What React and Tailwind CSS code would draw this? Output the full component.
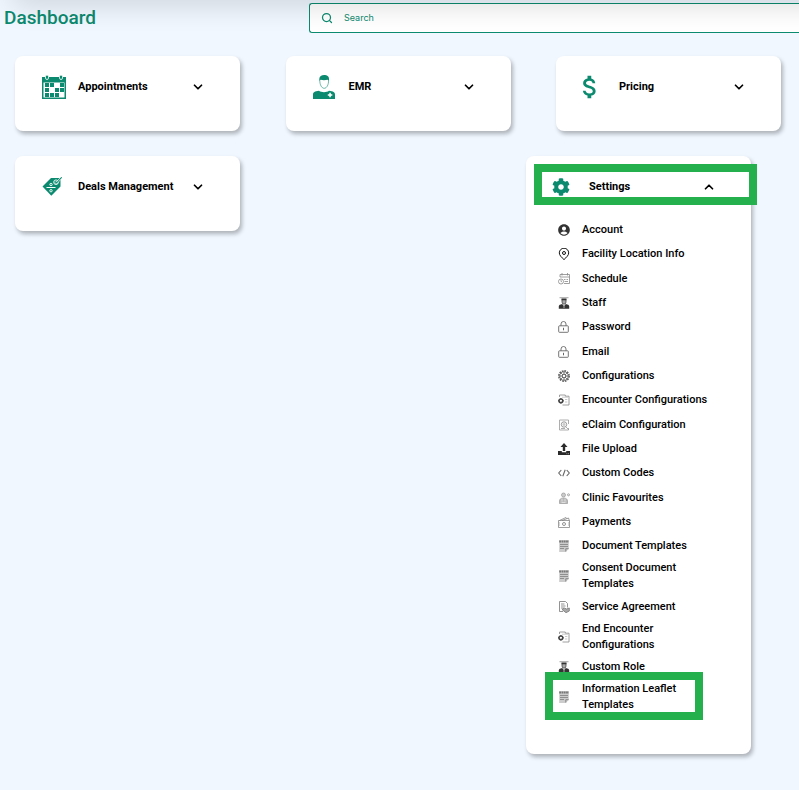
import React, { useState } from 'react'
import { ChevronDown, ChevronUp, Search } from 'lucide-react'
import { FaCog } from 'react-icons/fa'
import { MdAccountCircle, MdAttachMoney } from 'react-icons/md'

const CalendarIcon = () => (
  <svg viewBox="0 0 24 24" className="w-6 h-6" fill="#0c8a6f">
    <path d="M0 2h24v22H0zM1.500 7.500v15h21v-15z" fillRule="evenodd" />
    <rect x="3.500" y="0" width="3" height="4.500" rx="1.500" stroke="#fff" strokeWidth=".8" />
    <rect x="17.500" y="0" width="3" height="4.500" rx="1.500" stroke="#fff" strokeWidth=".8" />
    <path d="M8 8h4v4H8zM3 8h4v4H3zM18 8h4v4h-4zM3 13h4v4H3zM13 13h4v4h-4zM18 13h4v4h-4zM3 18h4v4H3zM8 18h4v4H8zM13 18h4v4h-4z" />
  </svg>
)

const DoctorIcon = () => (
  <svg viewBox="0 0 22 24" className="w-[22px] h-6" fill="#0c8a6f">
    <path d="M6.300 6V4C6.300 1.200 8.500 0 11.200 0s4.800 1 4.800 4v2l-1.300-1.300c-2.300.6-5 .6-7 .1z" />
    <path d="M6.800 5.500c0 4 1.700 7.800 4.400 7.800s4.400-3.800 4.400-7.800" fill="none" stroke="#0c8a6f" strokeWidth=".6" />
    <path d="M0 24v-4.200c0-2.600 1.700-3.600 6-4 1.200 1 3.200 1.400 5 1.400s3.800-.4 5-1.400c4.300.4 6 1.400 6 4V24z" />
    <path d="M16.300 17.800h1.500v1.500h1.500v1.500h-1.500v1.500h-1.500v-1.500h-1.500v-1.500h1.500z" fill="#fff" />
  </svg>
)

const DealsIcon = () => (
  <svg viewBox="0 0 20 20" className="w-5 h-5">
    <path d="M.5 9.500 9 1h9.500v8.500L9.300 18.800z" fill="#0c8a6f" />
    <path d="M4.500 10.500h9" stroke="#fff" strokeWidth="1" />
    <circle cx="9" cy="7.500" r="1.200" fill="none" stroke="#fff" strokeWidth=".9" />
    <circle cx="9" cy="13.700" r="1.200" fill="none" stroke="#fff" strokeWidth=".9" />
    <circle cx="14" cy="5.200" r="2.300" fill="none" stroke="#fff" strokeWidth=".9" />
    <path d="m13 4.500 1.500 1.500L19 1" fill="none" stroke="#fff" strokeWidth="2" />
    <path d="m13 4.500 1.500 1.500L19.700.3" fill="none" stroke="#0c8a6f" strokeWidth="1.100" />
  </svg>
)

// Small line icons of the settings menu share one 12px frame
const MenuSvg = ({ children, color = '#777' }) => (
  <svg viewBox="0 0 12 12" className="w-3 h-3" fill="none" stroke={color} strokeWidth="1">
    {children}
  </svg>
)

const AccountIcon = () => <MdAccountCircle className="w-3.5 h-3.5 -ml-px text-[#333]" />

const PinIcon = () => (
  <MenuSvg color="#111">
    <path d="M6 11.600C3.500 9.200 1.300 7.300 1.300 4.900a4.700 4.700 0 0 1 9.400 0C10.700 7.300 8.500 9.200 6 11.600z" />
    <circle cx="6" cy="5" r="1.500" />
  </MenuSvg>
)

const ScheduleIcon = () => (
  <MenuSvg color="#888">
    <path d="M2 4V1.500h9.500v9H6M2 4h9.500M4 0v2.500M9.500 0v2.500M6 6.500h1.500M8.500 6.500H10M6.500 8.500H10" strokeWidth=".8" />
    <circle cx="3" cy="8.500" r="2.500" strokeWidth=".8" />
    <path d="M3 7v1.600h1" strokeWidth=".7" />
  </MenuSvg>
)

const StaffIcon = () => (
  <MenuSvg color="#333">
    <path d="M1.500 .3h9v.9h-9z" fill="#999" stroke="none" />
    <path d="M4 2.500h4V5a2 2.200 0 0 1-4 0z" fill="#aaa" strokeWidth=".7" />
    <path d="M3.500 1.500h5v1.800h-5zM.8 11.700V9.300C.8 8 2.300 7.500 4.100 7L6 9l1.900-2c1.800.5 3.300 1 3.300 2.300v2.400z" fill="#333" stroke="none" />
    <path d="M6 8.500v2.500" stroke="#fff" strokeWidth=".6" />
  </MenuSvg>
)

const LockIcon = () => (
  <MenuSvg color="#666">
    <rect x=".7" y="4.800" width="9.600" height="6.500" rx=".7" strokeWidth=".9" />
    <path d="M3 4.800V3a2.500 2.500 0 0 1 5 0v1.800" strokeWidth=".9" />
    <path d="M5.500 6.800v2.500" strokeWidth="1" />
  </MenuSvg>
)

const GearIcon = () => (
  <MenuSvg color="#555">
    <circle cx="6" cy="6" r="5.200" strokeWidth="1.400" strokeDasharray="1.700 1" />
    <circle cx="6" cy="6" r="4.300" strokeWidth=".8" />
    <circle cx="6" cy="6" r="1.700" strokeWidth=".8" />
    <path d="M6 2v2.400M6 7.600V10M2 6h2.400M7.600 6H10M3.200 3.200l1.700 1.700M7.100 7.100l1.700 1.700M8.800 3.200 7.100 4.900M4.900 7.100 3.200 8.800" strokeWidth=".9" />
  </MenuSvg>
)

const EncounterIcon = () => (
  <MenuSvg color="#888">
    <path d="M1.500 3V1h5.800v1.200H11V11H4.500" strokeWidth=".8" />
    <path d="M4 3.200h6M7 5.500h2.300M7 8h2.300" stroke="#bbb" strokeWidth=".8" />
    <circle cx="2.900" cy="6.800" r="1.900" stroke="#444" strokeWidth="1.500" />
    <path d="M2.900 4v1.200M2.900 8.400v1.200M0 6.800h1.200M4.600 6.800h1.200" stroke="#444" strokeWidth="1" />
  </MenuSvg>
)

const ClaimIcon = () => (
  <MenuSvg color="#999">
    <path d="M1.500 1h9v4M1.500 1v10h9V9" strokeWidth=".8" />
    <circle cx="6" cy="5.500" r="2.700" strokeWidth="1" />
    <circle cx="6" cy="5.500" r=".9" strokeWidth=".7" />
    <path d="M3 9.500h4M8 8l3 3" strokeWidth=".8" />
  </MenuSvg>
)

const UploadIcon = () => (
  <MenuSvg color="#2b2b2b">
    <path d="M6 0 2.500 4h2.300v4h2.400V4h2.300zM0 8h3.800v1.300h4.400V8H12v4H0z" fill="#2b2b2b" stroke="none" />
    <path d="M8.500 10.700h.8M10.200 10.700h.8" stroke="#fff" strokeWidth=".6" />
  </MenuSvg>
)

const CodeIcon = () => (
  <MenuSvg color="#666">
    <path d="M3.300 3 .7 6l2.600 3M8.700 3l2.600 3-2.600 3M7.200 2.700 4.800 9.300" strokeWidth="1.100" />
  </MenuSvg>
)

const ClinicIcon = () => (
  <MenuSvg color="#999">
    <circle cx="5.500" cy="3" r="2" fill="#ccc" strokeWidth=".7" />
    <path d="M1.500 11.500V9c0-1.800 1.500-3 4-3s4 1.200 4 3v2.500z" fill="#bbb" strokeWidth=".7" />
    <path d="M4 6.500v3M7 6.500v3M3.500 10.500h4" stroke="#eee" strokeWidth=".7" />
    <circle cx="10.500" cy="2.800" r="1" strokeWidth=".9" />
  </MenuSvg>
)

const PaymentsIcon = () => (
  <MenuSvg color="#777">
    <path d="M.5 4.500h11v7H.5zM1.500 4.500 8 1.500l1 1.300M4 4.500 10.500 2l.8 2.500" strokeWidth=".7" />
    <circle cx="6" cy="8" r="1.500" strokeWidth=".8" />
    <path d="M1.500 6v4M10.500 6v4" stroke="#bbb" strokeWidth=".6" />
  </MenuSvg>
)

const TemplateIcon = () => (
  <MenuSvg color="#777">
    <path d="M1.200 0h9.600v8.700L7.800 12H1.200z" fill="#ccc" stroke="none" />
    <path d="M1.200 1.500h9.600" strokeWidth="2" strokeDasharray="1.800 .5" />
    <path d="M2 4.500h8M2 6.500h8M2 8.500h4" stroke="#888" strokeWidth=".9" />
    <path d="M7.800 11.500V8.700h2.800" strokeWidth=".8" />
  </MenuSvg>
)

const AgreementIcon = () => (
  <MenuSvg color="#777">
    <path d="M1.500.5h6l2 2v4M1.500.5v10H5" strokeWidth=".8" />
    <path d="M3 3h3.500M3 5h4.500M3 7h3" strokeWidth=".8" />
    <path d="m4 8.500 2.500-1.500 2 1L11.300 7v3L8 11.700z" fill="#aaa" strokeWidth=".8" />
  </MenuSvg>
)

const settingsItems = [
  { label: 'Account', icon: AccountIcon },
  { label: 'Facility Location Info', icon: PinIcon },
  { label: 'Schedule', icon: ScheduleIcon },
  { label: 'Staff', icon: StaffIcon },
  { label: 'Password', icon: LockIcon },
  { label: 'Email', icon: LockIcon },
  { label: 'Configurations', icon: GearIcon },
  { label: 'Encounter Configurations', icon: EncounterIcon },
  { label: 'eClaim Configuration', icon: ClaimIcon },
  { label: 'File Upload', icon: UploadIcon },
  { label: 'Custom Codes', icon: CodeIcon },
  { label: 'Clinic Favourites', icon: ClinicIcon },
  { label: 'Payments', icon: PaymentsIcon },
  { label: 'Document Templates', icon: TemplateIcon },
  { label: 'Consent Document Templates', icon: TemplateIcon, tall: true },
  { label: 'Service Agreement', icon: AgreementIcon },
  { label: 'End Encounter Configurations', icon: EncounterIcon, tall: true },
  { label: 'Custom Role', icon: StaffIcon },
  { label: 'Information Leaflet Templates', icon: TemplateIcon, tall: true, marked: true },
]

const MenuCard = ({ title, icon, items, marked, defaultOpen = false, className = '' }) => {
  const [open, setOpen] = useState(defaultOpen)
  const Chevron = open ? ChevronUp : ChevronDown

  return (
    <section className={`relative w-[225px] min-h-[75px] bg-white rounded-lg shadow-[2px_3px_4px_rgba(0,0,0,0.28)] ${className}`}>
      <button
        type="button"
        aria-expanded={open}
        onClick={() => setOpen(!open)}
        className="flex items-center w-full h-[61px] pl-[27px] pr-[35px] text-left"
      >
        <span className="flex w-9 shrink-0">{icon}</span>
        <span className="flex-1 text-[11px] leading-4 font-bold whitespace-nowrap">{title}</span>
        <Chevron className="w-3.5 h-3.5" strokeWidth={3} />
      </button>
      {marked && (
        <span className="absolute left-2 -right-1.5 top-2 h-[41px] border-8 border-[#24b14d] pointer-events-none" />
      )}

      {open && items && (
        <ul className="flex flex-col min-h-[498px] pt-px mb-[39px]">
          {items.map(({ label, icon: Icon, tall, marked: itemMarked }) => (
            <li key={label} className={`relative flex ${tall ? 'min-h-9' : 'min-h-6 grow'}`}>
              <a href="#" className="flex items-center flex-1 pl-8 pr-9">
                <span className="w-6 shrink-0">
                  <Icon />
                </span>
                <span className="text-[11px] leading-4 font-medium">{label}</span>
              </a>
              {itemMarked && (
                <span className="absolute left-[19px] -top-[7px] -bottom-[5px] w-[158px] border-8 border-[#24b14d] pointer-events-none" />
              )}
            </li>
          ))}
        </ul>
      )}
    </section>
  )
}

const App = () => {
  return (
    <div className="relative min-h-screen overflow-hidden bg-[#f0f7ff] text-black font-['Roboto',sans-serif]">
      {/* Shadow cast by the navigation bar above */}
      <div className="absolute z-10 left-3 -right-10 -top-5 h-5 shadow-[0_2px_30px_rgba(0,0,0,0.2)] pointer-events-none" />

      <header className="flex items-center pt-[3px]">
        <h1 className="w-[309px] pl-1 text-[19px] leading-7 font-medium text-[#0c8a6f]">Dashboard</h1>
        <label className="flex items-center flex-1 h-[30px] pl-[11px] gap-[11px] bg-white border border-r-0 border-[#0c8a6f] rounded-l-[3px]">
          <Search className="w-3 h-3 text-[#0c8a6f]" strokeWidth={2.5} />
          <input
            type="text"
            aria-label="Search"
            placeholder="Search"
            className="flex-1 min-w-0 bg-transparent outline-none text-[9px] leading-4 font-['Inter',sans-serif] placeholder:text-[#0c8a6f]"
          />
        </label>
      </header>

      <main className="flex flex-col gap-[25px] pt-[23px] pl-[15px] pr-[18px] pb-9">
        <div className="flex justify-between">
          <MenuCard title="Appointments" icon={<CalendarIcon />} />
          <MenuCard title="EMR" icon={<DoctorIcon />} />
          <MenuCard title="Pricing" icon={<MdAttachMoney className="w-[30px] h-[30px] -ml-2 text-[#0c8a6f]" />} />
        </div>
        <div className="flex justify-between items-start">
          <MenuCard title="Deals Management" icon={<DealsIcon />} />
          <MenuCard
            title="Settings"
            icon={<FaCog className="w-[18px] h-[18px] -ml-px text-[#0c8a6f]" />}
            items={settingsItems}
            marked
            defaultOpen
            className="mr-[30px]"
          />
        </div>
      </main>
    </div>
  )
}

export default App
